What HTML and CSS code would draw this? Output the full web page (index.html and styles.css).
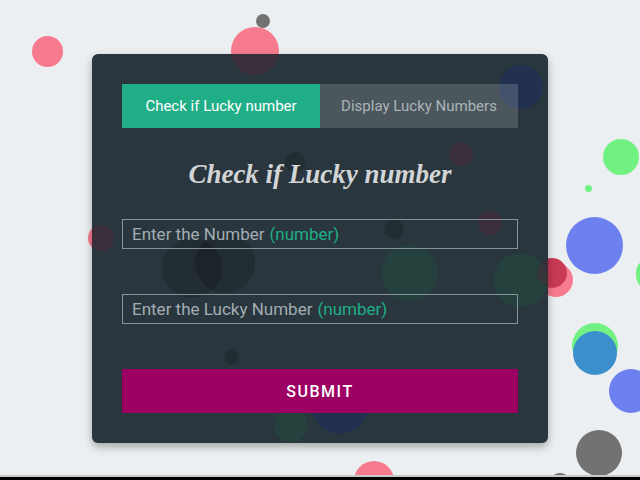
FILE: index.html
```html
<!DOCTYPE html>
<html>
<head>
<meta charset="utf-8">
<link rel="stylesheet" href="styles.css">
</head>
<body>
<div class="stage">
  <div class="bubbles">
    <span class="b pink" style="left:32px;top:36px;width:31px;height:31px"></span>
    <span class="b gray" style="left:256px;top:14px;width:14px;height:14px"></span>
    <span class="b pink" style="left:231px;top:27px;width:48px;height:48px"></span>
    <span class="b green" style="left:603px;top:139px;width:36px;height:36px"></span>
    <span class="b green" style="left:585px;top:185px;width:7px;height:7px"></span>
    <span class="b blue" style="left:566px;top:217px;width:57px;height:57px"></span>
    <span class="b green" style="left:636px;top:262px;width:12px;height:24px"></span>
    <span class="b pink" style="left:88px;top:225px;width:26px;height:26px"></span>
    <span class="b pink" style="left:539px;top:263px;width:34px;height:34px"></span>
    <span class="b red" style="left:537px;top:258px;width:30px;height:30px"></span>
    <span class="b green" style="left:572px;top:323px;width:46px;height:46px"></span>
    <span class="b teal" style="left:573px;top:331px;width:44px;height:44px"></span>
    <span class="b blue" style="left:609px;top:369px;width:44px;height:44px"></span>
    <span class="b gray" style="left:576px;top:430px;width:46px;height:46px"></span>
    <span class="b pink" style="left:354px;top:461px;width:40px;height:40px"></span>
    <span class="b gray" style="left:549px;top:473px;width:22px;height:22px"></span>
  </div>
  <div class="card">
    <div class="ghosts">
      <span class="b g-red" style="left:139px;top:-27px;width:48px;height:48px"></span>
      <span class="b g-blue" style="left:407px;top:11px;width:44px;height:44px"></span>
      <span class="b g-red" style="left:357px;top:88px;width:24px;height:24px"></span>
      <span class="b g-dark" style="left:193px;top:98px;width:20px;height:20px"></span>
      <span class="b g-red" style="left:-4px;top:171px;width:26px;height:26px"></span>
      <span class="b g-red" style="left:386px;top:157px;width:24px;height:24px"></span>
      <span class="b g-dark" style="left:292px;top:165px;width:20px;height:20px"></span>
      <span class="b g-dark" style="left:70px;top:184px;width:60px;height:60px"></span>
      <span class="b g-dark" style="left:103px;top:179px;width:60px;height:60px"></span>
      <span class="b g-green" style="left:290px;top:191px;width:56px;height:56px"></span>
      <span class="b g-green" style="left:402px;top:199px;width:54px;height:54px"></span>
      <span class="b g-red" style="left:445px;top:204px;width:30px;height:30px"></span>
      <span class="b g-dark" style="left:132px;top:296px;width:15px;height:15px"></span>
      <span class="b g-blue" style="left:220px;top:324px;width:56px;height:56px"></span>
      <span class="b g-green" style="left:182px;top:354px;width:34px;height:34px"></span>
    </div>
    <div class="tabs">
      <div class="tab active">Check if Lucky number</div>
      <div class="tab">Display Lucky Numbers</div>
    </div>
    <h1 class="title">Check if Lucky number</h1>
    <div class="field"><span class="ph">Enter the Number</span> <span class="type">(number)</span></div>
    <div class="field second"><span class="ph">Enter the Lucky Number</span> <span class="type">(number)</span></div>
    <button class="submit">SUBMIT</button>
  </div>
</div>
<div class="bottombar"></div>
</body>
</html>
```

FILE: styles.css
```css
html, body {
  margin: 0;
  padding: 0;
  background: #000;
  overflow: hidden;
}
.stage {
  position: relative;
  height: 475px;
  background: #eceff1;
  overflow: hidden;
  padding-top: 54px;
  box-sizing: border-box;
  font-family: Roboto, "Liberation Sans", sans-serif;
}
.bottombar {
  height: 2px;
  background: #c6c8c9;
}
.bubbles {
  position: absolute;
  inset: 0;
}
.b {
  position: absolute;
  border-radius: 50%;
  display: block;
}
.pink { background: #f77b8e; }
.gray { background: #727272; }
.blue { background: #6c80f0; }
.green { background: #70f181; }
.red { background: #c93a55; }
.teal { background: #3c8fcd; }

.card {
  position: relative;
  z-index: 1;
  width: 456px;
  margin: 0 auto;
  box-sizing: border-box;
  padding: 30px 30px;
  background: #29363e;
  border-radius: 6px;
  box-shadow: 0 4px 8px rgba(0, 0, 0, 0.3);
  overflow: hidden;
}
.ghosts {
  position: absolute;
  inset: 0;
}
.g-red { background: rgba(120, 20, 50, 0.22); }
.g-dark { background: rgba(0, 0, 0, 0.17); }
.g-blue { background: rgba(20, 40, 120, 0.3); }
.g-green { background: rgba(20, 110, 60, 0.2); }

.tabs {
  position: relative;
  display: flex;
  height: 44px;
}
.tab {
  flex: 1;
  display: flex;
  align-items: center;
  justify-content: center;
  font-size: 15px;
  color: #aab4b9;
  background: rgba(255, 255, 255, 0.16);
}
.tab.active {
  background: #1fae86;
  color: #ffffff;
}
.title {
  position: relative;
  margin: 0;
  height: 91px;
  box-sizing: border-box;
  padding-top: 30px;
  text-align: center;
  font-family: "Liberation Serif", serif;
  font-style: italic;
  font-weight: bold;
  font-size: 27px;
  line-height: 32px;
  color: #d2d4d6;
}
.field {
  position: relative;
  height: 30px;
  box-sizing: border-box;
  border: 1px solid #87939a;
  padding: 0 9px;
  display: flex;
  align-items: center;
  gap: 5px;
  font-size: 17px;
}
.field.second {
  margin-top: 45px;
}
.ph { color: #a3adb2; }
.type { color: #1fae86; }
.submit {
  position: relative;
  display: block;
  width: 100%;
  margin-top: 45px;
  height: 44px;
  border: none;
  background: #9c0062;
  color: #ffffff;
  font-family: Roboto, "Liberation Sans", sans-serif;
  font-size: 16px;
  font-weight: 500;
  letter-spacing: 1.5px;
}
```
